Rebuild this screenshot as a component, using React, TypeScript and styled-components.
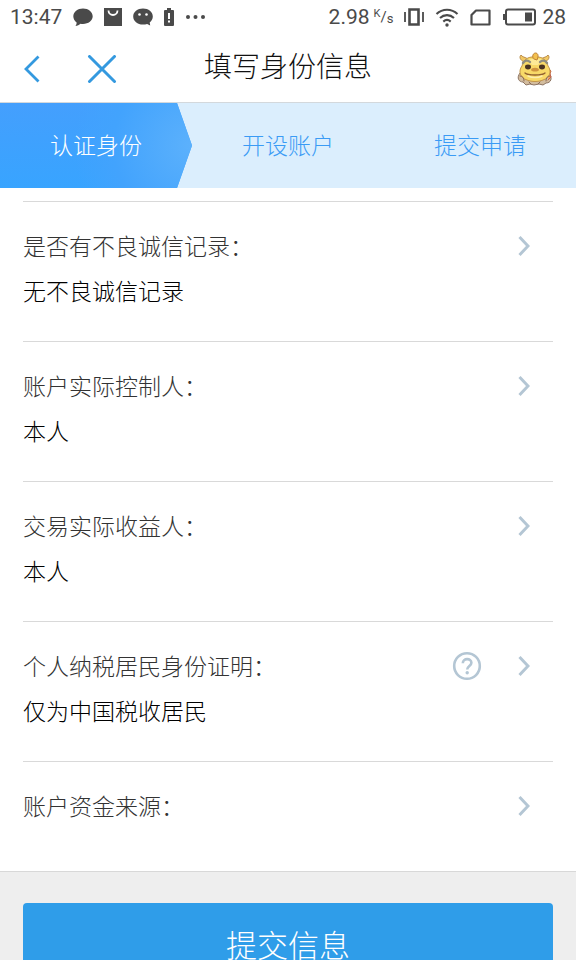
import React from 'react';
import styled, { createGlobalStyle } from 'styled-components';

const GlobalStyle = createGlobalStyle`
  * { box-sizing: border-box; }
  body {
    margin: 0;
    background: #fff;
    font-family: "Noto Sans CJK SC", sans-serif;
    font-weight: 300;
  }
  button {
    margin: 0;
    padding: 0;
    border: 0;
    background: none;
    color: inherit;
    font: inherit;
    cursor: pointer;
  }
  svg { display: block; flex: none; }
`;

const Screen = styled.div`
  display: flex;
  flex-direction: column;
  height: 100vh;
  overflow: hidden;
`;

const StatusBar = styled.div`
  display: flex;
  flex: none;
  justify-content: space-between;
  height: 34px;
  padding: 0 10px;
  color: #4a4a4a;
  font: 400 21px/34px Roboto, sans-serif;
`;

const StatusGroup = styled.div`
  display: flex;
  align-items: center;
  gap: 11px;
`;

const Speed = styled.span`
  display: flex;
  gap: 4px;
`;

const BatteryLevel = styled.span`
  display: flex;
  align-items: center;
  gap: 6px;
`;

const Header = styled.header`
  display: grid;
  flex: none;
  grid-template-columns: 1fr auto 1fr;
  align-items: center;
  height: 69px;
  padding: 2px 23px 0;
  border-bottom: 1px solid #d3d8dc;
`;

const HeaderActions = styled.div`
  display: flex;
  gap: 46px;
`;

const Title = styled.h1`
  margin: 0;
  padding-bottom: 8px;
  color: #111;
  font-size: 28px;
  font-weight: 300;
  line-height: 40px;
`;

const MascotButton = styled.button`
  justify-self: end;
`;

const Steps = styled.ol`
  display: grid;
  flex: none;
  grid-template-columns: repeat(3, 1fr);
  margin: 0;
  padding: 0;
  background: #dbeefd;
  list-style: none;
`;

const Step = styled.li<{ $active?: boolean }>`
  padding-bottom: 3px;
  color: ${p => (p.$active ? '#fff' : '#3a9bf5')};
  background: ${p => (p.$active
    ? 'radial-gradient(circle at 100% 50%, #5cb1fc 0, #42a3fd 40%, transparent 60%), linear-gradient(#449ffd, #38a4ff)'
    : 'none')};
  clip-path: ${p => (p.$active
    ? 'polygon(0 0, calc(100% - 15px) 0, 100% 50%, calc(100% - 15px) 100%, 0 100%)'
    : 'none')};
  font-size: 23px;
  line-height: 82px;
  text-align: center;
`;

const Content = styled.main`
  flex: 1;
  min-height: 0;
  overflow-y: auto;
  background: #eee;
  scrollbar-width: none;
`;

const Fields = styled.div`
  padding: 13px 23px 0;
  border-bottom: 1px solid #d8d8d8;
  background: #fff;
`;

const Field = styled.div`
  display: grid;
  grid-template-columns: 1fr auto auto;
  column-gap: 36px;
  padding: 21px 23px 28px 0;
  border-top: 1px solid #d9d9d9;
  font-size: 23px;
  line-height: 45px;

  &:last-child { padding-bottom: 43px; }
`;

const FieldName = styled.span`
  color: #333;
`;

const FieldValue = styled.span`
  grid-column: 1 / -1;
  color: #000;
`;

const IconButton = styled.button`
  display: flex;
  align-items: center;
  color: #b4c6d4;
`;

const Footer = styled.footer`
  padding: 31px 23px;
`;

const Submit = styled.button`
  display: block;
  width: 100%;
  padding-bottom: 4px;
  border-radius: 4px;
  background: #2f9de9;
  color: #fff;
  font-size: 31px;
  line-height: 82px;
`;

const ChatIcon = () => (
  <svg width="20" height="20" viewBox="0 0 20 20" fill="currentColor" aria-hidden="true">
    <path d="M10 1.500c5.400 0 9.700 3.400 9.700 7.800S15.400 17 10 17c-.9 0-1.700-.1-2.500-.2C6.300 18 4.400 18.800 2.400 19c.9-1.100 1.300-2.200 1.200-3.500C1.600 14 .3 11.800.3 9.300.3 4.900 4.600 1.500 10 1.500z" />
  </svg>
);

const BagIcon = () => (
  <svg width="18" height="18" viewBox="0 0 18 18" aria-hidden="true">
    <path fill="currentColor" d="M0 0h18v18H0z" />
    <path d="M4.500 2.500a4.500 4.500 0 0 0 9 0" fill="none" stroke="#fff" strokeWidth="1.800" />
  </svg>
);

const FaceIcon = () => (
  <svg width="20" height="20" viewBox="0 0 20 20" aria-hidden="true">
    <path fill="currentColor" d="M10 1.500c5.500 0 9.800 3.500 9.800 8 0 2.400-1.200 4.500-3.100 6l.5 3-3.100-1.500c-1.300.4-2.700.6-4.100.6C4.500 17.600.2 14 .2 9.500s4.300-8 9.800-8z" />
    <circle cx="6.500" cy="7.500" r="1.300" fill="#fff" />
    <circle cx="13.500" cy="7.500" r="1.300" fill="#fff" />
  </svg>
);

const LowBatteryIcon = () => (
  <svg width="10" height="18" viewBox="0 0 10 18" aria-hidden="true">
    <path fill="currentColor" d="M3 0h4v2h2q1 0 1 1v14q0 1-1 1H1q-1 0-1-1V3q0-1 1-1h2z" />
    <path fill="#fff" d="M4 5h2v6H4zM4 12.500h2v2H4z" />
  </svg>
);

const DotsIcon = () => (
  <svg width="20" height="6" viewBox="0 0 20 6" fill="currentColor" aria-hidden="true">
    <circle cx="3" cy="3" r="2" />
    <circle cx="10.500" cy="3" r="2" />
    <circle cx="18" cy="3" r="2" />
  </svg>
);

const RateUnit = styled.span`
  display: flex;
  align-items: center;
  font-size: 15px;
  line-height: 16px;
`;

const UnitTop = styled.span`
  padding-bottom: 6px;
  font-size: 11px;
`;

const UnitBottom = styled.span`
  padding-top: 4px;
  font-size: 13px;
`;

const VibrateIcon = () => (
  <svg width="20" height="18" viewBox="0 0 20 18" fill="none" stroke="currentColor" aria-hidden="true">
    <path d="M5.500 1.500h9v15h-9z" strokeWidth="2.600" />
    <path d="M1 4v10M19 4v10" strokeWidth="1.800" />
  </svg>
);

const WifiIcon = () => (
  <svg width="24" height="19" viewBox="0 0 24 19" fill="none" stroke="currentColor" strokeWidth="2.100" aria-hidden="true">
    <path d="M1.500 6C7.500.3 16.500.3 22.500 6M5 10c4-3.800 10-3.800 14 0M8.300 13.600c2.200-2 5.200-2 7.400 0" />
    <circle cx="12" cy="17" r="1.700" fill="currentColor" stroke="none" />
  </svg>
);

const SimIcon = () => (
  <svg width="21" height="17" viewBox="0 0 21 17" fill="none" stroke="currentColor" strokeWidth="2.200" strokeLinejoin="round" aria-hidden="true">
    <path d="M6 1.500h13.500v14h-18V6z" />
  </svg>
);

const BatteryIcon = () => (
  <svg width="34" height="18" viewBox="0 0 34 18" aria-hidden="true">
    <rect x="4" y="1.500" width="29" height="15" rx="2" fill="none" stroke="currentColor" strokeWidth="2" />
    <path d="M1 6h3v6H1zM23 4.500h7v9h-7z" fill="currentColor" />
  </svg>
);

const BackIcon = () => (
  <svg width="18" height="28" viewBox="0 0 18 28" fill="none" stroke="#3499df" strokeWidth="2.800" aria-hidden="true">
    <path d="M15.500 1.500 3 14l12.500 12.500" />
  </svg>
);

const CloseIcon = () => (
  <svg width="30" height="28" viewBox="0 0 30 28" fill="none" stroke="#3499df" strokeWidth="3" strokeLinecap="round" aria-hidden="true">
    <path d="m2.500 1.500 25 25M27.500 1.500l-25 25" />
  </svg>
);

const ChevronIcon = () => (
  <svg width="12" height="22" viewBox="0 0 12 22" fill="none" stroke="currentColor" strokeWidth="3" aria-hidden="true">
    <path d="m1.500 2 8.500 9-8.500 9" />
  </svg>
);

const HelpIcon = () => (
  <svg width="30" height="30" viewBox="0 0 30 30" fill="none" stroke="currentColor" strokeWidth="2.600" aria-hidden="true">
    <circle cx="15" cy="15" r="12.800" />
    <path d="M10.800 12.200c0-5.400 8.600-5.300 8.600-.5 0 3.200-4.200 3.300-4.200 6.800" />
    <circle cx="15.200" cy="21.800" r="1.700" fill="currentColor" stroke="none" />
  </svg>
);

const LionIcon = () => (
  <svg width="36" height="36" viewBox="0 0 36 36" strokeLinejoin="round" strokeLinecap="round" aria-hidden="true">
    <path d="M3 22c-4 5-1 9 3 9l3 3 4-1 4 1 5-1 4 1 3-2c5 0 7-5 3-10z" fill="#d3bd9f" stroke="#8d7462" />
    <path d="m32 18 2 2-1 3 1 3-3 3" fill="#f0a05c" stroke="#c9604a" />
    <path d="M7 11C3 9 2 6 4 4c1 2 4 2 7 4M28 11c4-2 5-5 3-7-1 2-4 2-7 4" fill="#f2c863" stroke="#b98a48" />
    <path d="M18 6C10 5 6 10 5 15c-4 5-2 12 5 14 5 2 11 2 16 0 7-2 9-9 5-14C30 10 26 5 18 6z" fill="#f8d968" stroke="#c3954a" />
    <path d="M11 9c5-2 10-2 14 0l-4 5h-6z" fill="#fdea96" />
    <path d="M16 7c-2-6 6-7 5-1l-1 3-3-1z" fill="#f3c04e" stroke="#bf8436" />
    <path d="M6 12c2-3 5-3 7-1M30 12c-2-3-5-3-7-1" fill="none" stroke="#8f8c80" strokeWidth="2.400" />
    <ellipse cx="11" cy="16" rx="3" ry="2.400" fill="#4a3322" />
    <ellipse cx="25" cy="16" rx="3" ry="2.400" fill="#4a3322" />
    <path d="M14 19c0-3 8-3 8 0-1 2-7 2-8 0z" fill="#cf9440" />
    <path d="M8 22c2 2 5 2 10 2s8 0 10-2" fill="none" stroke="#92602f" strokeWidth="1.300" />
    <path d="M11 25c4 2 10 2 14 0" fill="none" stroke="#fdeeb0" strokeWidth="1.400" />
    <path d="M3 25c3 0 4 2 4 5M33 25c-3 0-4 2-4 5M12 31l2 2M23 31l-2 2" fill="none" stroke="#8b6a56" />
  </svg>
);

const fields = [
  { name: '是否有不良诚信记录', value: '无不良诚信记录' },
  { name: '账户实际控制人', value: '本人' },
  { name: '交易实际收益人', value: '本人' },
  { name: '个人纳税居民身份证明', value: '仅为中国税收居民', help: true },
  { name: '账户资金来源' },
];

export default function App() {
  return (
    <Screen lang="zh-CN">
      <GlobalStyle />
      <StatusBar>
        <StatusGroup>
          <span>13:47</span>
          <ChatIcon />
          <BagIcon />
          <FaceIcon />
          <LowBatteryIcon />
          <DotsIcon />
        </StatusGroup>
        <StatusGroup>
          <Speed>
            <span>2.98</span>
            <RateUnit>
              <UnitTop>K</UnitTop>
              <span>/</span>
              <UnitBottom>s</UnitBottom>
            </RateUnit>
          </Speed>
          <VibrateIcon />
          <WifiIcon />
          <SimIcon />
          <BatteryLevel>
            <BatteryIcon />
            <span>28</span>
          </BatteryLevel>
        </StatusGroup>
      </StatusBar>
      <Header>
        <HeaderActions>
          <button type="button" aria-label="返回"><BackIcon /></button>
          <button type="button" aria-label="关闭"><CloseIcon /></button>
        </HeaderActions>
        <Title>填写身份信息</Title>
        <MascotButton type="button" aria-label="客服"><LionIcon /></MascotButton>
      </Header>
      <Steps>
        <Step $active aria-current="step">认证身份</Step>
        <Step>开设账户</Step>
        <Step>提交申请</Step>
      </Steps>
      <Content>
        <Fields>
          {fields.map(field => (
            <Field key={field.name}>
              <FieldName>{field.name}：</FieldName>
              {field.help ? (
                <IconButton type="button" aria-label="说明"><HelpIcon /></IconButton>
              ) : (
                <span />
              )}
              <IconButton type="button" aria-label={field.name}><ChevronIcon /></IconButton>
              {field.value && <FieldValue>{field.value}</FieldValue>}
            </Field>
          ))}
        </Fields>
        <Footer>
          <Submit type="button">提交信息</Submit>
        </Footer>
      </Content>
    </Screen>
  );
}
